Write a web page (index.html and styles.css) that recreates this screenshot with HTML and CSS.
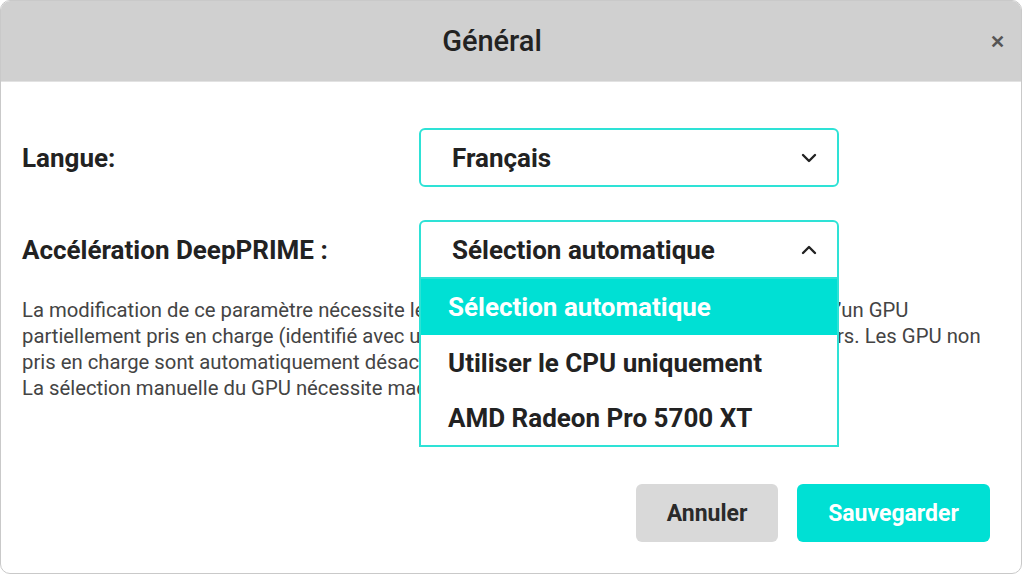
FILE: index.html
```html
<!DOCTYPE html>
<html lang="fr">
<head>
    <meta charset="UTF-8">
    <title>Général</title>
    <link rel="stylesheet" href="styles.css">
</head>
<body>

<div class="dialog">
    <div class="dialog-header">
        <h2>Général</h2>
        <span class="close-btn">&#x2715;</span>
    </div>

    <div class="dialog-body">
        <!-- Langue -->
        <div class="form-row">
            <label>Langue:</label>
            <div class="select-box">
                <span>Français</span>
                <svg class="chevron" width="16" height="10" viewBox="0 0 16 10"><polyline points="2,2 8,8 14,2" fill="none" stroke="#222" stroke-width="2.4" stroke-linecap="round" stroke-linejoin="round"/></svg>
            </div>
        </div>

        <!-- DeepPRIME -->
        <div class="form-row second">
            <label>Accélération DeepPRIME :</label>
            <div class="select-box open">
                <span>Sélection automatique</span>
                <svg class="chevron" width="16" height="10" viewBox="0 0 16 10"><polyline points="2,8 8,2 14,8" fill="none" stroke="#222" stroke-width="2.4" stroke-linecap="round" stroke-linejoin="round"/></svg>
                <ul class="dropdown">
                    <li class="active">Sélection automatique</li>
                    <li>Utiliser le CPU uniquement</li>
                    <li>AMD Radeon Pro 5700 XT</li>
                </ul>
            </div>
        </div>

        <p class="note">
            La modification de ce paramètre nécessite le redémarrage de DxO PhotoLab. L’utilisation d’un GPU<br>
            partiellement pris en charge (identifié avec un astérisque) peut parfois provoquer des erreurs. Les GPU non<br>
            pris en charge sont automatiquement désactivés.<br>
            La sélection manuelle du GPU nécessite macOS 10.15 ou ultérieur.
        </p>

        <div class="dialog-footer">
            <button class="btn btn-cancel">Annuler</button>
            <button class="btn btn-save">Sauvegarder</button>
        </div>
    </div>
</div>

</body>
</html>
```

FILE: styles.css
```css
body {
    margin: 0;
    padding: 0;
    font-family: Roboto, "Liberation Sans", sans-serif;
    background-color: #fff;
}
.dialog {
    width: 1020px;
    height: 572px;
    border: 1px solid #c9c9c9;
    border-radius: 10px;
    overflow: hidden;
    display: flex;
    flex-direction: column;
    background-color: #fff;
}
.dialog-header {
    height: 80px;
    flex-shrink: 0;
    background-color: #d0d0d0;
    border-bottom: 1px solid #e2e2e2;
    display: flex;
    align-items: center;
    justify-content: center;
    position: relative;
}
.dialog-header h2 {
    margin: 0 0 0 -38px;
    font-size: 29px;
    font-weight: 500;
    color: #222;
}
.close-btn {
    position: absolute;
    right: 16px;
    top: 30px;
    font-size: 18px;
    font-weight: 700;
    color: #555;
}
.dialog-body {
    flex: 1;
    display: flex;
    flex-direction: column;
    padding: 46px 31px 31px 21px;
}
.form-row {
    display: flex;
    align-items: center;
}
.form-row.second {
    margin-top: 33px;
}
.form-row label {
    width: 397px;
    font-size: 26px;
    font-weight: 700;
    color: #222;
}
.select-box {
    position: relative;
    width: 420px;
    height: 59px;
    box-sizing: border-box;
    border: 2px solid #2ee2d6;
    border-radius: 6px;
    display: flex;
    align-items: center;
    justify-content: space-between;
    padding: 0 20px 0 31px;
    font-size: 26px;
    font-weight: 700;
    color: #222;
}
.select-box.open {
    border-bottom-left-radius: 0;
    border-bottom-right-radius: 0;
}
.dropdown {
    position: absolute;
    left: -2px;
    right: -2px;
    top: 57px;
    margin: 0;
    padding: 0;
    list-style: none;
    background-color: #fff;
    border: 2px solid #2ee2d6;
    border-top: none;
}
.dropdown li {
    height: 55px;
    display: flex;
    align-items: center;
    padding-left: 27px;
    font-size: 26px;
    font-weight: 700;
    color: #222;
}
.dropdown li.active {
    background-color: #00e0d4;
    color: #fff;
    height: 56px;
}
.note {
    margin: 18px 0 0;
    font-size: 20.3px;
    line-height: 26px;
    color: #444;
    white-space: nowrap;
}
.dialog-footer {
    margin-top: auto;
    display: flex;
    justify-content: flex-end;
    gap: 19px;
}
.btn {
    height: 58px;
    border: none;
    border-radius: 6px;
    font-family: Roboto, "Liberation Sans", sans-serif;
    font-size: 23px;
    font-weight: 700;
    cursor: pointer;
}
.btn-cancel {
    width: 142px;
    background-color: #d9d9d9;
    color: #2a2a2a;
}
.btn-save {
    width: 193px;
    background-color: #00e0d4;
    color: #fff;
}
```
